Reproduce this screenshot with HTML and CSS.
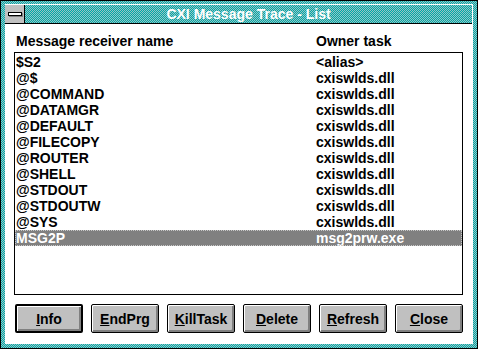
FILE: index.html
```html
<!DOCTYPE html>
<html lang="en">

<head>
    <meta charset="UTF-8" />
    <meta name="viewport" content="width=device-width, initial-scale=1.0" />
    <title>CXI Message Trace - List</title>
    <link rel="stylesheet" href="styles.css">
</head>

<body>
    <div class="window">
        <div class="inner">
            <div class="titlebar">
                <div class="control-box"><span class="bar"></span></div>
                <div class="title">CXI Message Trace - List</div>
            </div>

            <div class="client">
                <div class="columns">
                    <span class="col-name">Message receiver name</span>
                    <span class="col-task">Owner task</span>
                </div>

                <div class="listbox">
                    <div class="row"><span class="col-name">$S2</span><span class="col-task">&lt;alias&gt;</span></div>
                    <div class="row"><span class="col-name">@$</span><span class="col-task">cxiswlds.dll</span></div>
                    <div class="row"><span class="col-name">@COMMAND</span><span class="col-task">cxiswlds.dll</span></div>
                    <div class="row"><span class="col-name">@DATAMGR</span><span class="col-task">cxiswlds.dll</span></div>
                    <div class="row"><span class="col-name">@DEFAULT</span><span class="col-task">cxiswlds.dll</span></div>
                    <div class="row"><span class="col-name">@FILECOPY</span><span class="col-task">cxiswlds.dll</span></div>
                    <div class="row"><span class="col-name">@ROUTER</span><span class="col-task">cxiswlds.dll</span></div>
                    <div class="row"><span class="col-name">@SHELL</span><span class="col-task">cxiswlds.dll</span></div>
                    <div class="row"><span class="col-name">@STDOUT</span><span class="col-task">cxiswlds.dll</span></div>
                    <div class="row"><span class="col-name">@STDOUTW</span><span class="col-task">cxiswlds.dll</span></div>
                    <div class="row"><span class="col-name">@SYS</span><span class="col-task">cxiswlds.dll</span></div>
                    <div class="row selected"><span class="col-name">MSG2P</span><span class="col-task">msg2prw.exe</span></div>
                </div>

                <div class="buttons">
                    <button class="btn default"><u>I</u>nfo</button>
                    <button class="btn"><u>E</u>ndPrg</button>
                    <button class="btn"><u>K</u>illTask</button>
                    <button class="btn"><u>D</u>elete</button>
                    <button class="btn"><u>R</u>efresh</button>
                    <button class="btn"><u>C</u>lose</button>
                </div>
            </div>
        </div>
    </div>
</body>

</html>
```

FILE: styles.css
```css
* {
    margin: 0;
    padding: 0;
    box-sizing: border-box;
}

body {
    background-color: #ffffff;
    font-family: 'Liberation Sans', Arial, sans-serif;
    font-size: 14px;
    font-weight: bold;
    color: #000000;
}

/* dithered teal, like the 16 colour frame */
.window,
.titlebar {
    background-color: #2aa8a8;
    background-image: repeating-conic-gradient(#00a8a8 0 25%, #98c4c4 0 50%);
    background-size: 2px 2px;
}

.window {
    width: 478px;
    height: 349px;
    border: 1px solid #000;
    padding: 3px 4px 4px 4px;
}

.inner {
    height: 100%;
    display: flex;
    flex-direction: column;
    background-color: #ffffff;
    border-top: 1px solid #ffffff;
    border-right: 1px solid #ffffff;
}

.titlebar {
    display: flex;
    height: 19px;
    border-bottom: 1px solid #000;
}

.control-box {
    width: 20px;
    height: 18px;
    background-color: #c0c0c0;
    border-right: 1px solid #000;
    padding: 7px 0 0 3px;
}

.control-box .bar {
    display: block;
    width: 14px;
    height: 4px;
    background-color: #fff;
    border: 1px solid #000;
    box-shadow: 1px 1px 0 #808080;
}

.title {
    flex-grow: 1;
    color: #ffffff;
    text-align: center;
    line-height: 18px;
}

.client {
    flex-grow: 1;
    padding: 9px 9px 0 9px;
}

.columns,
.row {
    display: flex;
    height: 16px;
    line-height: 16px;
    white-space: nowrap;
}

.columns {
    padding-left: 2px;
    margin-bottom: 3px;
}

.col-name {
    width: 300px;
}

.listbox {
    height: 243px;
    border: 1px solid #000;
    padding-top: 1px;
}

.row {
    padding-left: 1px;
}

.row.selected {
    background-color: #808080;
    color: #ffffff;
    outline: 1px dotted #c8c8c8;
    outline-offset: -1px;
}

.buttons {
    display: flex;
    gap: 8px;
    margin-top: 9px;
    padding-left: 1px;
}

.btn {
    width: 68px;
    height: 29px;
    font-family: inherit;
    font-size: 14px;
    font-weight: bold;
    color: #000;
    background-color: #c0c0c0;
    border: 1px solid #000;
    border-radius: 2px;
    box-shadow: inset 1px 1px 0 #ffffff, inset -2px -2px 0 #808080;
    padding-top: 1px;
}

.btn.default {
    border-width: 2px;
}
```
